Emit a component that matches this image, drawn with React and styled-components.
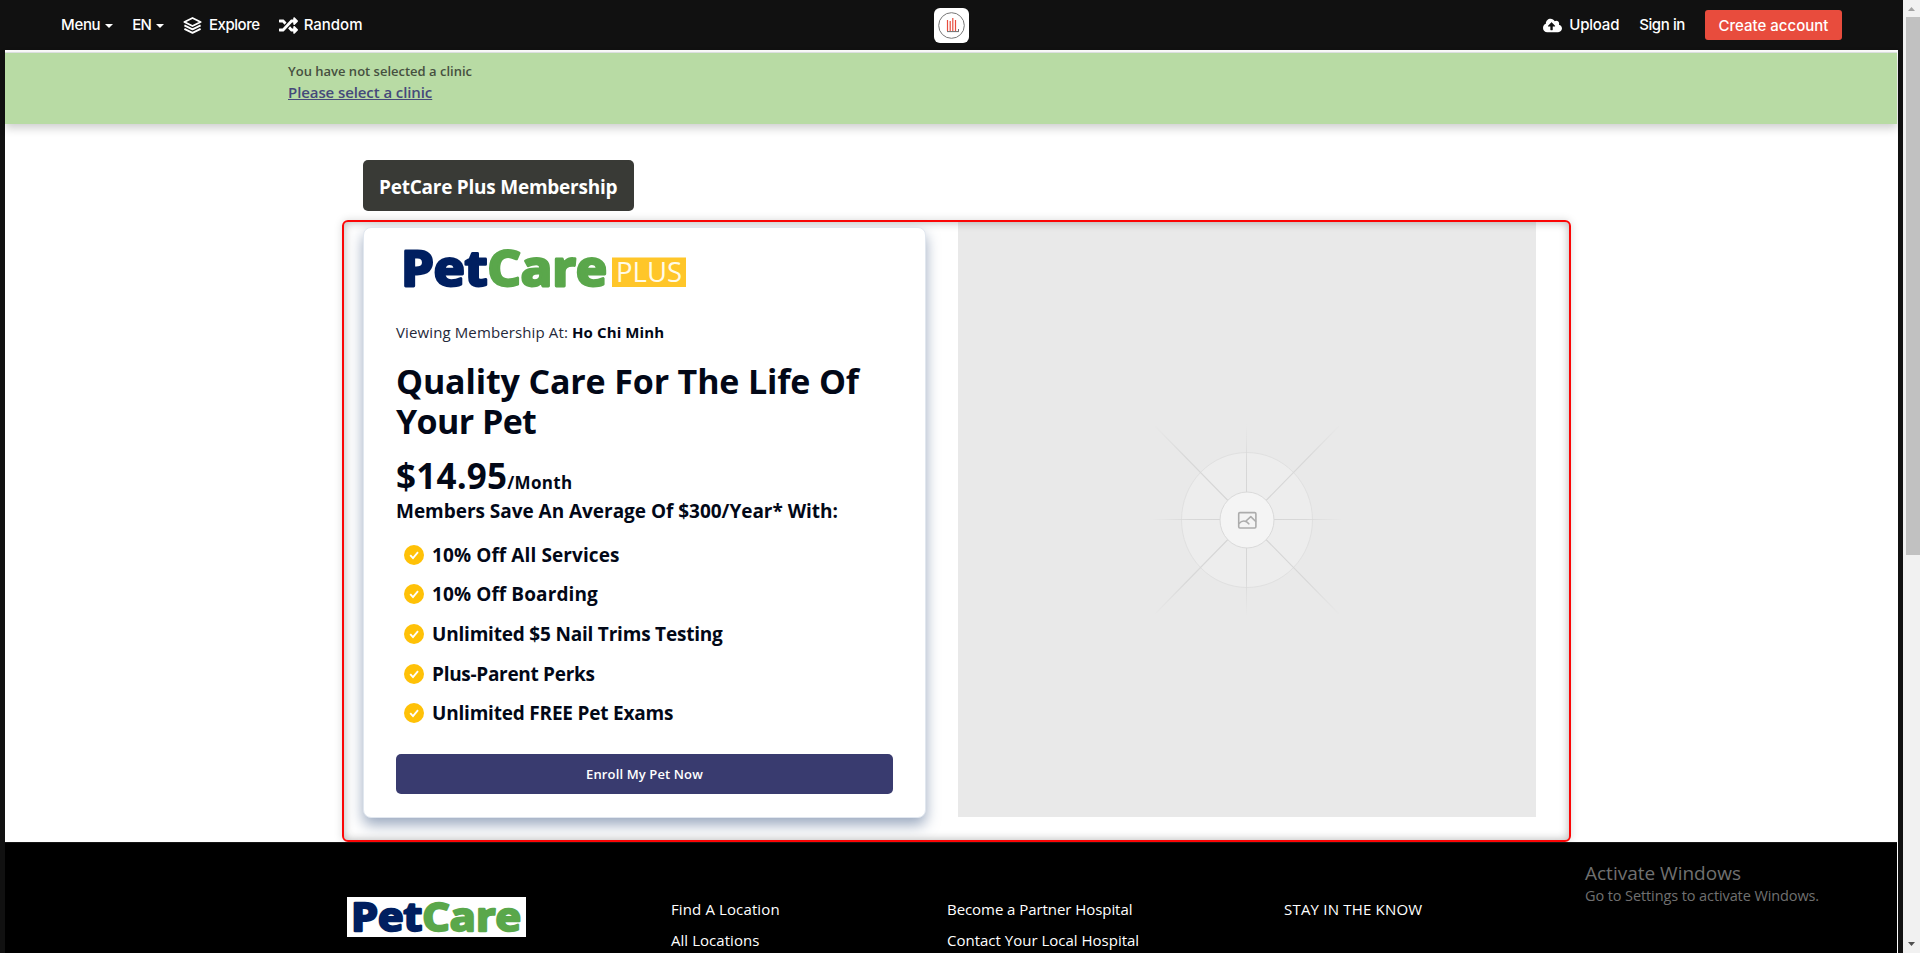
import React, { Component } from 'react';
import styled, { createGlobalStyle } from 'styled-components';
import { FaRandom, FaCloudUploadAlt } from 'react-icons/fa';

const GlobalStyle = createGlobalStyle`
    * { box-sizing: border-box; }
    body {
        margin: 0;
        overflow: hidden;
        background: #fff;
        font-family: "Open Sans", "Noto Sans", sans-serif;
    }
`;

const Window = styled.div`
    display: flex;
    width: 1920px;
    height: 953px;
    overflow: hidden;
`;

const Screen = styled.div`
    display: flex;
    flex-direction: column;
    width: 1903px;
    background: #111;
`;

const Nav = styled.nav`
    display: grid;
    grid-template-columns: 1fr 35px 1fr;
    align-items: center;
    height: 50px;
    flex: none;
    padding: 0 61px;
    font-family: Inter, sans-serif;
    font-size: 15px;
    font-weight: 500;
    color: #fff;
`;

const NavGroup = styled.div`
    display: flex;
    align-items: center;
    justify-content: ${p => (p.$end ? 'flex-end' : 'flex-start')};
`;

const NavLink = styled.a`
    display: flex;
    align-items: center;
    gap: ${p => p.$gap || 7}px;
    margin-right: ${p => p.$right || 0}px;
    line-height: 20px;
    letter-spacing: ${p => p.$track || 0}px;
    white-space: nowrap;
`;

const Caret = styled.i`
    border: 4px solid transparent;
    border-top-color: #fff;
    border-bottom: 0;
    margin-top: 2px;
`;

const CreateButton = styled.button`
    width: 137px;
    height: 30px;
    padding: 0;
    border: 0;
    border-radius: 3px;
    background: #e84c3d;
    color: #fff;
    font: inherit;
`;

const Page = styled.main`
    display: flex;
    flex-direction: column;
    flex: 1;
    margin: 0 5px;
    padding-top: 2px;
    border-right: 1px solid #fff;
    background: #fff;
`;

const Notice = styled.div`
    flex: none;
    height: 72px;
    padding: 8px 0 0 283px;
    border-top: 1px solid #dcdfe0;
    background: #b8dba4;
    box-shadow: 0 4px 9px rgba(0, 0, 0, 0.2);
`;

const NoticeText = styled.div`
    font-size: 13px;
    font-weight: 600;
    line-height: 20px;
    color: #46503f;
`;

const NoticeLink = styled.a`
    display: inline-block;
    font-size: 15px;
    font-weight: 600;
    line-height: 23px;
    color: #45497a;
    text-decoration: underline;
    letter-spacing: -0.09px;
`;

const Title = styled.h1`
    flex: none;
    width: 271px;
    height: 51px;
    margin: 36px 0 9px 358px;
    padding-left: 16px;
    border-radius: 5px;
    background: #393a36;
    color: #fff;
    font-size: 19px;
    font-weight: 700;
    line-height: 54px;
    letter-spacing: -0.24px;
    white-space: nowrap;
`;

const Highlight = styled.section`
    display: flex;
    flex: none;
    width: 1229px;
    height: 622px;
    margin-left: 337px;
    padding: 0 0 0 19px;
    border: 2px solid #fb0606;
    border-radius: 6px;
    box-shadow: 0 0 9px rgba(0, 0, 0, 0.15), inset 0 0 10px rgba(0, 0, 0, 0.3);
`;

const Card = styled.article`
    width: 563px;
    height: 591px;
    margin: 5px 32px 0 0;
    padding: 18px 32px 0;
    border: 1px solid #e1e7ef;
    border-radius: 8px;
    background: #fff;
    color: #020817;
    box-shadow: 0 7px 14px rgba(58, 86, 130, 0.5);
`;

const Viewing = styled.p`
    display: flex;
    gap: 4px;
    margin: 26px 0 17px;
    font-size: 15px;
    line-height: 24px;
    letter-spacing: 0.12px;
    color: #25293a;

    b {
        color: #020817;
    }
`;

const Heading = styled.h2`
    margin: 0 0 12px;
    font-size: 34px;
    font-weight: 700;
    line-height: 40px;
    white-space: nowrap;
`;

const HeadingLine = styled.span`
    display: block;
    letter-spacing: ${p => p.$track}px;
`;

const Price = styled.div`
    height: 45px;
    font-size: 35px;
    font-weight: 700;
    line-height: 45px;
    letter-spacing: 0.2px;

    small {
        font-size: 17px;
        line-height: 1;
        letter-spacing: 0.3px;
    }
`;

const Saving = styled.div`
    font-size: 19px;
    font-weight: 700;
    line-height: 26px;
    letter-spacing: -0.03px;
    white-space: nowrap;
`;

const Perks = styled.ul`
    margin: 11px 0 21px;
    padding: 0 0 0 8px;
    list-style: none;
`;

const Perk = styled.li`
    display: flex;
    align-items: center;
    gap: 8px;
    height: 39.6px;
    font-size: 19px;
    font-weight: 700;
    letter-spacing: ${p => p.$track}px;
    white-space: nowrap;
`;

const Enroll = styled.button`
    display: block;
    width: 497px;
    height: 40px;
    border: 0;
    border-radius: 5px;
    background: #393b6f;
    color: #fff;
    font-family: inherit;
    font-size: 13px;
    font-weight: 600;
    letter-spacing: 0.12px;
`;

const Placeholder = styled.div`
    display: flex;
    justify-content: center;
    width: 578px;
    height: 595px;
    padding-top: 202px;
    background: rgba(0, 0, 0, 0.086);
`;

const Footer = styled.footer`
    display: flex;
    flex: 1;
    padding: 54px 0 0 342px;
    border-top: 1px solid #161616;
    background: #000;
    color: #fff;
`;

const LogoBox = styled.div`
    flex: none;
    width: 179px;
    height: 40px;
    background: #fff;
`;

const FooterColumn = styled.div`
    display: flex;
    flex-direction: column;
    width: ${p => p.$width}px;
    margin-left: ${p => p.$left || 0}px;
`;

const FooterLink = styled.a`
    height: 31.3px;
    font-size: 15px;
    line-height: 25px;
    letter-spacing: ${p => p.$track || 0}px;
    white-space: nowrap;
`;

// sits over the whole page like the system notice does
const Watermark = styled.div`
    position: absolute;
    left: 1585px;
    top: 860px;
    color: #707070;
    font-size: 19px;
    line-height: 27px;
    white-space: nowrap;

    div {
        font-size: 14.5px;
        line-height: 18px;
        letter-spacing: -0.1px;
    }
`;

const Scrollbar = styled.div`
    display: flex;
    flex-direction: column;
    align-items: center;
    width: 17px;
    background: #f1f1f1;
`;

const ScrollThumb = styled.div`
    width: 14px;
    height: 538px;
    margin: 0 0 auto 2px;
    background: #c1c1c1;
`;

const Arrow = styled.svg`
    display: block;
    width: 17px;
    height: 17px;
    fill: ${p => p.color};
`;

const Svg = styled.svg`
    display: block;
    flex: none;
    overflow: visible;
`;

const PetCareWord = ({ size, width, y }) => (
    <text
        x="0"
        y={y}
        fontSize={size}
        fontWeight="700"
        textLength={width}
        lengthAdjust="spacingAndGlyphs"
        strokeLinejoin="round"
        strokeWidth={size / 17}
    >
        <tspan fill="#001f60" stroke="#001f60">Pet</tspan>
        <tspan fill="#5aa74b" stroke="#5aa74b">Care</tspan>
    </text>
);

const PlusLogo = () => (
    <Svg width="300" height="48">
        <g transform="translate(5 0)">
            <PetCareWord size={48.5} width={206} y={40} />
        </g>
        <rect x="216" y="11.5" width="74" height="29.5" fill="#ffc629" />
        <text x="220" y="36" fontSize="28" fontWeight="400" fill="#fffbe8" textLength="66" lengthAdjust="spacingAndGlyphs">
            PLUS
        </text>
    </Svg>
);

const BrandLogo = () => (
    <Svg width="35" height="35" viewBox="0 0 35 35">
        <rect width="35" height="35" rx="6" fill="#fff" />
        <circle cx="17.5" cy="17.5" r="12.8" fill="none" stroke="#777" strokeWidth="1" />
        <path d="M13.5 12v11M16.2 13v10M18.8 10v13M21.5 12v11" stroke="#e84c3d" strokeWidth="1.2" />
        <path d="M13 23.6h12M24.5 21v2" stroke="#444" strokeWidth=".8" />
    </Svg>
);

const LayersIcon = () => (
    <Svg width="19" height="17" viewBox="0 0 19 17" fill="none" stroke="#fff" strokeWidth="1.9" strokeLinejoin="round">
        <path d="M9.5 1 17.6 5 9.5 9 1.4 5z" />
        <path d="m1.4 8.4 8.1 4 8.1-4M1.4 11.8l8.1 4 8.1-4" />
    </Svg>
);

const CheckIcon = () => (
    <Svg width="20" height="20" viewBox="0 0 20 20">
        <circle cx="10" cy="10" r="10" fill="#ffc107" />
        <path d="m6.2 10.2 2.8 2.9 5-5.9" fill="none" stroke="#fff" strokeWidth="1.9" />
    </Svg>
);

const EmptyImage = () => (
    <Svg width="190" height="192" viewBox="-95 -96 190 192">
        <defs>
            <radialGradient id="ray" gradientUnits="userSpaceOnUse" cx="0" cy="0" r="96">
                <stop offset="0" stopColor="#d4d4d4" />
                <stop offset=".6" stopColor="#d8d8d8" />
                <stop offset="1" stopColor="#dadada" stopOpacity="0" />
            </radialGradient>
            <radialGradient id="rayLong" gradientUnits="userSpaceOnUse" cx="0" cy="0" r="134">
                <stop offset="0" stopColor="#d4d4d4" />
                <stop offset=".65" stopColor="#d8d8d8" />
                <stop offset="1" stopColor="#dadada" stopOpacity="0" />
            </radialGradient>
        </defs>
        <ellipse rx="65.5" ry="67.5" fill="#ededed" stroke="#e0e0e0" />
        <path d="M-94-.5H94M-.5-96V96" stroke="url(#ray)" />
        <path d="M-92-94 92 94M92-94-92 94" stroke="url(#rayLong)" strokeWidth="1.2" />
        <ellipse rx="27" ry="28" fill="#f4f4f4" stroke="#dadada" />
        <g fill="none" stroke="#acacac" strokeWidth="1.6" strokeLinejoin="round" strokeLinecap="round">
            <rect x="-8.3" y="-7.4" width="17.2" height="15.4" rx="1.2" />
            <path d="M-8 3.5C-5 .2-1 .2 1.8 3.8M-1 1 3.8-3.4 8.5 1.2" />
        </g>
    </Svg>
);

const perks = [
    { text: '10% Off All Services', track: 0.1 },
    { text: '10% Off Boarding', track: 0.1 },
    { text: 'Unlimited $5 Nail Trims Testing', track: -0.2 },
    { text: 'Plus-Parent Perks', track: -0.3 },
    { text: 'Unlimited FREE Pet Exams', track: -0.2 },
];

class App extends Component {
    render() {
        return (
            <Window>
                <GlobalStyle />
                <Screen>
                    <Nav>
                        <NavGroup>
                            <NavLink $gap={5} $right={19} $track={-0.3}>Menu <Caret /></NavLink>
                            <NavLink $gap={5} $right={19} $track={-0.9}>EN <Caret /></NavLink>
                            <NavLink $right={19} $track={-0.45}><LayersIcon />Explore</NavLink>
                            <NavLink $gap={6}><FaRandom size={19} />Random</NavLink>
                        </NavGroup>
                        <BrandLogo />
                        <NavGroup $end>
                            <NavLink $right={20} $track={-0.2}><FaCloudUploadAlt size={19} />Upload</NavLink>
                            <NavLink $right={20} $track={-0.4}>Sign in</NavLink>
                            <CreateButton>Create account</CreateButton>
                        </NavGroup>
                    </Nav>
                    <Page>
                        <Notice>
                            <NoticeText>You have not selected a clinic</NoticeText>
                            <NoticeLink>Please select a clinic</NoticeLink>
                        </Notice>
                        <Title>PetCare Plus Membership</Title>
                        <Highlight>
                            <Card>
                                <PlusLogo />
                                <Viewing>
                                    <span>Viewing Membership At:</span>
                                    <b>Ho Chi Minh</b>
                                </Viewing>
                                <Heading>
                                    <HeadingLine $track={-0.15}>Quality Care For The Life Of</HeadingLine>
                                    <HeadingLine $track={-0.6}>Your Pet</HeadingLine>
                                </Heading>
                                <Price>$14.95<small>/Month</small></Price>
                                <Saving>Members Save An Average Of $300/Year* With:</Saving>
                                <Perks>
                                    {perks.map(perk => (
                                        <Perk key={perk.text} $track={perk.track}>
                                            <CheckIcon />
                                            {perk.text}
                                        </Perk>
                                    ))}
                                </Perks>
                                <Enroll>Enroll My Pet Now</Enroll>
                            </Card>
                            <Placeholder>
                                <EmptyImage />
                            </Placeholder>
                        </Highlight>
                        <Footer>
                            <LogoBox>
                                <Svg width="179" height="40">
                                    <g transform="translate(4 0)">
                                        <PetCareWord size={40} width={170} y={34} />
                                    </g>
                                </Svg>
                            </LogoBox>
                            <FooterColumn $width={276} $left={145}>
                                <FooterLink $track={0.12}>Find A Location</FooterLink>
                                <FooterLink $track={0.05}>All Locations</FooterLink>
                            </FooterColumn>
                            <FooterColumn $width={337}>
                                <FooterLink $track={-0.06}>Become a Partner Hospital</FooterLink>
                                <FooterLink>Contact Your Local Hospital</FooterLink>
                            </FooterColumn>
                            <FooterColumn $width={200}>
                                <FooterLink $track={0.2}>STAY IN THE KNOW</FooterLink>
                            </FooterColumn>
                        </Footer>
                    </Page>
                </Screen>
                <Scrollbar>
                    <Arrow color="#a3a3a3"><path d="M5 11h7L8.5 7z" /></Arrow>
                    <ScrollThumb />
                    <Arrow color="#505050"><path d="M5 6h7l-3.5 4z" /></Arrow>
                </Scrollbar>
                <Watermark>
                    Activate Windows
                    <div>Go to Settings to activate Windows.</div>
                </Watermark>
            </Window>
        );
    }
}

export default App;
